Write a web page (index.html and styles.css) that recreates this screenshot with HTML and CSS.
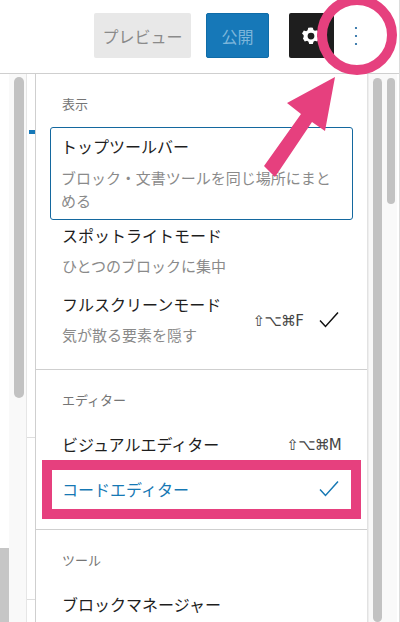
FILE: index.html
```html
<!DOCTYPE html>
<html lang="ja">
<head>
<meta charset="utf-8">
<title>エディター</title>
<link rel="stylesheet" href="styles.css">
</head>
<body>
<div class="screen">
  <header class="topbar">
    <button class="btn btn-preview">プレビュー</button>
    <button class="btn btn-publish">公開</button>
    <button class="btn btn-settings" aria-label="設定">
      <svg viewBox="0 0 24 24" width="22" height="22"><path fill="#fff" fill-rule="evenodd" d="M12 2.6l2 .4.7 2.500 1.600.9 2.500-.7 2 3.200-1.800 1.900v2l1.800 1.900-2 3.300-2.500-.7-1.600.9-.7 2.400h-4l-.7-2.400-1.600-.9-2.500.7-2-3.300L4 13.100v-2L2.200 9.200l2-3.200 2.500.7 1.600-.9L9 3zM12 8.400a3.700 3.700 0 1 0 0 7.400 3.700 3.700 0 0 0 0-7.400z"/></svg>
    </button>
    <button class="btn btn-more" aria-label="オプション">
      <svg viewBox="0 0 4 24" width="4" height="24"><circle cx="2" cy="4" r="1.100"/><circle cx="2" cy="12" r="1.100"/><circle cx="2" cy="20" r="1.100"/></svg>
    </button>
  </header>
  <div class="workspace">
    <div class="left-rail">
      <div class="gutter"><div class="gutter-block"></div></div>
      <div class="scroll-track track-left"><div class="scroll-thumb thumb-left"></div></div>
      <div class="content-strip">
        <span class="blue-tick"></span>
        <span class="hair hair-one"></span>
        <span class="hair hair-two"></span>
      </div>
    </div>
    <nav class="menu">
      <section class="group group-view">
        <h2 class="group-title">表示</h2>
        <div class="item item-focused">
          <div class="item-label">トップツールバー</div>
          <div class="item-desc">ブロック・文書ツールを同じ場所にまとめる</div>
        </div>
        <div class="item">
          <div class="item-label">スポットライトモード</div>
          <div class="item-desc">ひとつのブロックに集中</div>
        </div>
        <div class="item item-row">
          <div>
            <div class="item-label">フルスクリーンモード</div>
            <div class="item-desc">気が散る要素を隠す</div>
          </div>
          <span class="shortcut">⇧⌥⌘F</span>
          <svg class="check" viewBox="0 0 20 16" width="20" height="16"><path d="M1 8.500l5.500 6L19 .5" fill="none" stroke="#111" stroke-width="1.500"/></svg>
        </div>
      </section>
      <section class="group group-editor">
        <h2 class="group-title">エディター</h2>
        <div class="line line-visual">
          <span class="item-label">ビジュアルエディター</span>
          <span class="shortcut">⇧⌥⌘M</span>
        </div>
        <div class="line line-code">
          <span class="item-label">コードエディター</span>
          <svg class="check" viewBox="0 0 20 16" width="20" height="16"><path d="M1 8.500l5.500 6L19 .5" fill="none" stroke="#1678b4" stroke-width="1.500"/></svg>
        </div>
      </section>
      <section class="group group-tools">
        <h2 class="group-title">ツール</h2>
        <div class="line"><span class="item-label">ブロックマネージャー</span></div>
      </section>
    </nav>
    <div class="right-rail">
      <div class="scroll-track track-menu"><div class="scroll-thumb thumb-menu"></div></div>
      <div class="scroll-track track-page"><div class="scroll-thumb thumb-page"></div></div>
    </div>
  </div>
  <div class="overlay-ring"></div>
  <svg class="overlay-arrow" viewBox="0 0 90 110" width="90" height="110"><path fill="#e6407e" d="M75 1L27 27 41 38 4 90 15 101 52 46 65 55z"/></svg>
  <div class="overlay-box"></div>
</div>
</body>
</html>
```
FILE: styles.css
```css
* { box-sizing: border-box; }
html, body { margin: 0; padding: 0; }
body {
  width: 400px;
  height: 622px;
  overflow: hidden;
  background: #fff;
  font-family: "Noto Sans CJK JP", "Liberation Sans", sans-serif;
  color: #1e1e1e;
}
.screen {
  position: relative;
  width: 400px;
  height: 622px;
  overflow: hidden;
  border-right: 1px solid #dcdcdc;
}
.topbar {
  height: 74px;
  display: flex;
  align-items: flex-start;
  padding: 13px 0 0 94px;
  border-bottom: 1px solid #cfcfcf;
  background: #fff;
}
.btn {
  height: 45px;
  border: 1px solid transparent;
  border-radius: 2px;
  font: inherit;
  font-size: 16px;
  padding: 0;
  display: flex;
  align-items: center;
  justify-content: center;
}
.btn-preview { width: 97px; background: #e8e8e8; color: #8a8a8a; }
.btn-publish { width: 63px; margin-left: 15px; background: #1678b8; color: #7db6db; border-color: #0f6ca8; }
.btn-settings { width: 45px; margin-left: 20px; background: #1e1e1e; justify-content: flex-start; padding-left: 10px; }
.btn-more { width: 44px; background: none; }
.btn-more svg { fill: #14619c; }
.workspace { display: flex; height: 548px; }
.left-rail { width: 36px; display: flex; flex: none; background: #fff; }
.gutter { width: 9px; display: flex; flex-direction: column; justify-content: flex-end; }
.gutter-block { height: 74px; background: #c6c6c6; }
.scroll-track { background: #f9f9f9; }
.scroll-thumb { background: #c2c2c2; border-radius: 9px; }
.track-left { width: 18px; padding: 3px 3px 0 5px; border-right: 1px solid #e6e6e6; }
.thumb-left { height: 321px; width: 10px; }
.content-strip {
  width: 9px;
  display: flex;
  flex-direction: column;
  background: #fff;
  border-right: 1px solid #cfcfcf;
}
.blue-tick { margin-top: 56px; width: 6px; height: 4px; margin-left: 2px; background: #1678b8; }
.hair { height: 1px; background: #dedede; }
.hair-one { margin-top: 303px; }
.hair-two { margin-top: 161px; }
.menu {
  width: 332px;
  flex: none;
  background: #fff;
  border-right: 1px solid #e2e2e2;
}
.group { border-bottom: 1px solid #cfcfcf; padding: 0 14px; }
.group:last-child { border-bottom: none; }
.group-view { height: 296px; padding-top: 20px; }
.group-editor { height: 160px; padding-top: 20px; }
.group-tools { padding-top: 20px; }
.group-title { margin: 0 0 22px 12px; font-size: 13px; line-height: 20px; font-weight: 400; color: #757575; }
.group-view .group-title { margin-bottom: 13px; }
.item { padding: 0 12px 13px; }
.item-focused {
  border: 1.500px solid #14689f;
  border-radius: 3px;
  height: 93px;
  padding: 6px 10px 0 10px;
  margin-bottom: 3px;
}
.item-label { font-size: 16px; line-height: 24px; color: #1e1e1e; display: block; }
.item-desc { font-size: 15px; line-height: 26px; color: #8a8a8a; margin-top: 6px; }
.item-focused .item-desc { line-height: 23px; margin-top: 8px; }
.item-row { display: flex; align-items: center; padding-right: 14px; }
.shortcut {
  margin-left: auto;
  padding-top: 2px;
  font-size: 15px;
  color: #444;
  font-family: "DejaVu Sans", "Noto Sans CJK JP", sans-serif;
  letter-spacing: -0.800px;
}
.check { flex: none; margin-left: 16px; }
.line { display: flex; align-items: center; justify-content: space-between; height: 24px; padding: 0 12px; margin-bottom: 21px; }
.line-code .item-label { color: #1678b4; }
.line-code { padding-right: 14px; }
.right-rail { display: flex; flex: none; width: 31px; }
.track-menu { width: 17px; padding: 4px 3px 0 4px; border-left: 1px solid #eee; }
.track-page { width: 12px; padding: 4px 2px 0 2px; }
.thumb-menu { height: 100%; }
.thumb-page { height: 126px; }
.overlay-ring {
  position: absolute;
  left: 317px;
  top: -5px;
  width: 80px;
  height: 80px;
  border: 10px solid #e6407e;
  border-radius: 50%;
}
.overlay-arrow { position: absolute; left: 260px; top: 76px; }
.overlay-box {
  position: absolute;
  left: 42px;
  top: 460px;
  width: 319px;
  height: 59px;
  border: 10px solid #e6407e;
}
```
